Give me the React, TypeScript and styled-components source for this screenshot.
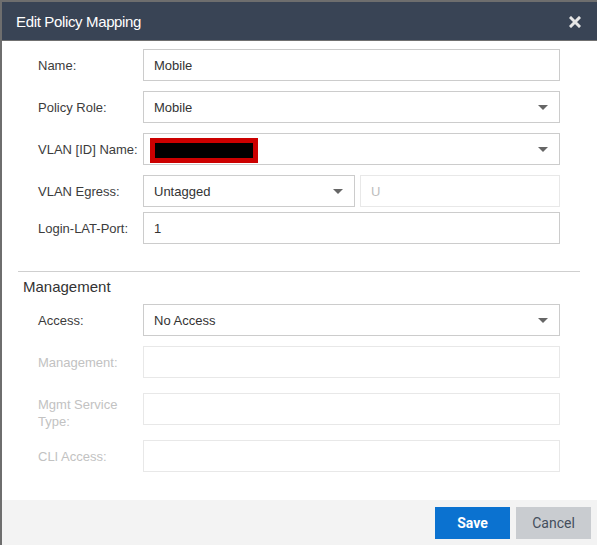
import React from "react";
import styled, { createGlobalStyle } from "styled-components";

const Global = createGlobalStyle`
  html, body { margin: 0; padding: 0; background: #ffffff; }
  body { font-family: "Liberation Sans", Arial, sans-serif; }
  * { box-sizing: border-box; }
`;

const Dialog = styled.div`
  width: 597px;
  height: 545px;
  display: flex;
  flex-direction: column;
  border-top: 2px solid #6e6e6e;
  border-left: 2px solid #6e6e6e;
  background: #ffffff;
  overflow: hidden;
`;

const Header = styled.div`
  height: 39px;
  flex: none;
  display: flex;
  align-items: center;
  justify-content: space-between;
  padding: 0 16px 0 14px;
  background: #394455;
  border-bottom: 1px solid #707070;
`;

const Title = styled.div`
  color: #ffffff;
  font-size: 15px;
  letter-spacing: -0.35px;
`;

const Close = styled.button`
  border: 0;
  background: transparent;
  padding: 0;
  margin-top: 1px;
  width: 13px;
  height: 13px;
  display: flex;
  align-items: center;
  justify-content: center;
  cursor: pointer;
`;

const Body = styled.div`
  flex: 1;
  display: flex;
  flex-direction: column;
  padding-top: 8px;
`;

const Section = styled.div`
  display: flex;
  flex-direction: column;
  padding: 0 37px 0 36px;
`;

const Row = styled.div<{ $after: number }>`
  display: grid;
  grid-template-columns: 105px 1fr;
  align-items: start;
  margin-bottom: ${(p) => p.$after}px;
`;

const Label = styled.div<{ $disabled?: boolean; $wrap?: boolean }>`
  font-size: 13px;
  line-height: 17px;
  padding: ${(p) => (p.$wrap ? "3px" : "8px")} 3px 0 0;
  color: ${(p) => (p.$disabled ? "#c2c2c2" : "#3c3c3c")};
`;

const Field = styled.div<{ $disabled?: boolean }>`
  position: relative;
  height: 32px;
  display: flex;
  align-items: center;
  padding: 0 10px;
  border: 1px solid ${(p) => (p.$disabled ? "#e8e8e8" : "#cccccc")};
  background: #ffffff;
  font-size: 13px;
  color: ${(p) => (p.$disabled ? "#bdbdbd" : "#333333")};
`;

const Arrow = styled.span`
  position: absolute;
  right: 11px;
  top: 50%;
  margin-top: -2px;
  width: 0;
  height: 0;
  border-left: 5px solid transparent;
  border-right: 5px solid transparent;
  border-top: 5px solid #666666;
`;

const Split = styled.div`
  display: grid;
  grid-template-columns: 212px 1fr;
  gap: 5px;
`;

const Redacted = styled.span`
  display: block;
  width: 108px;
  height: 25px;
  margin-left: -4px;
  margin-top: 3px;
  border: 5px solid #cc0000;
  background: #000000;
`;

const Divider = styled.hr`
  margin: 0 17px 0 16px;
  border: 0;
  border-top: 1px solid #cfcfcf;
  height: 0;
`;

const SectionTitle = styled.div`
  font-size: 15px;
  color: #333333;
  padding: 6px 0 0 21px;
  height: 32px;
`;

const Footer = styled.div`
  height: 45px;
  flex: none;
  display: flex;
  justify-content: flex-end;
  align-items: flex-start;
  gap: 6px;
  padding: 7px 6px 0 0;
  background: #f3f3f3;
`;

const Button = styled.button<{ $primary?: boolean }>`
  width: 75px;
  height: 32px;
  border: 0;
  font-family: Roboto, "Liberation Sans", Arial, sans-serif;
  font-size: 14px;
  font-weight: ${(p) => (p.$primary ? 700 : 400)};
  background: ${(p) => (p.$primary ? "#0b72d0" : "#c9ccd0")};
  color: ${(p) => (p.$primary ? "#ffffff" : "#444e5c")};
  cursor: pointer;
`;

const CloseIcon = () => (
  <svg width="12" height="12" viewBox="0 0 12 12">
    <path
      d="M2 2 L10 10 M10 2 L2 10"
      stroke="#e6e6e6"
      strokeWidth="3"
      strokeLinecap="square"
    />
  </svg>
);

export default function App() {
  return (
    <>
      <Global />
      <Dialog>
        <Header>
          <Title>Edit Policy Mapping</Title>
          <Close aria-label="Close">
            <CloseIcon />
          </Close>
        </Header>
        <Body>
          <Section>
            <Row $after={10}>
              <Label>Name:</Label>
              <Field>Mobile</Field>
            </Row>
            <Row $after={10}>
              <Label>Policy Role:</Label>
              <Field>
                Mobile
                <Arrow />
              </Field>
            </Row>
            <Row $after={10}>
              <Label>VLAN [ID] Name:</Label>
              <Field>
                <Redacted />
                <Arrow />
              </Field>
            </Row>
            <Row $after={5}>
              <Label>VLAN Egress:</Label>
              <Split>
                <Field>
                  Untagged
                  <Arrow />
                </Field>
                <Field $disabled>U</Field>
              </Split>
            </Row>
            <Row $after={27}>
              <Label>Login-LAT-Port:</Label>
              <Field>1</Field>
            </Row>
          </Section>
          <Divider />
          <SectionTitle>Management</SectionTitle>
          <Section>
            <Row $after={10}>
              <Label>Access:</Label>
              <Field>
                No Access
                <Arrow />
              </Field>
            </Row>
            <Row $after={15}>
              <Label $disabled>Management:</Label>
              <Field $disabled />
            </Row>
            <Row $after={10}>
              <Label $disabled $wrap>
                Mgmt Service Type:
              </Label>
              <Field $disabled />
            </Row>
            <Row $after={0}>
              <Label $disabled>CLI Access:</Label>
              <Field $disabled />
            </Row>
          </Section>
        </Body>
        <Footer>
          <Button $primary>Save</Button>
          <Button>Cancel</Button>
        </Footer>
      </Dialog>
    </>
  );
}
